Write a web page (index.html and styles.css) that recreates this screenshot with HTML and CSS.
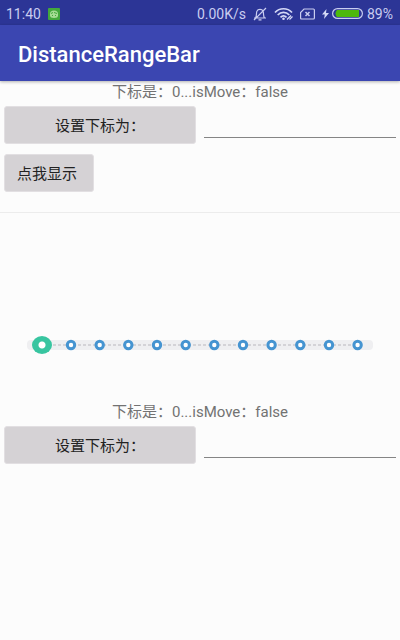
FILE: index.html
```html
<!DOCTYPE html>
<html lang="zh-CN">
<head>
<meta charset="utf-8">
<meta name="viewport" content="width=device-width, initial-scale=1">
<title>DistanceRangeBar</title>
<link rel="stylesheet" href="styles.css">
</head>
<body>
<div class="status">
  <span>11:40</span>
  <svg class="status-app" width="12" height="12" viewBox="0 0 12 12" aria-hidden="true">
    <rect width="12" height="12" rx="1" fill="#43a83c"/>
    <path d="M2 6a4 3.500 0 0 1 8 0v1.500a4 2.500 0 0 1-8 0z" fill="#a5dc94"/>
    <path d="M3 5.500l2-1M6 4.500l3 1M4 7.500h1M7 7.500h1" stroke="#43a83c" fill="none"/>
  </svg>
  <span class="status-speed">0.00K/s</span>
  <svg class="status-bell" width="14" height="14" viewBox="0 0 14 14" fill="none" stroke="#c9cdf0" stroke-width="1.200" aria-hidden="true">
    <path d="M1 11h12M2.500 11C4 9 3 6 4 4c1-2.200 5-2.200 6 0s0 5 1.500 7M5.500 12.800h3M1 13L13 1"/>
  </svg>
  <svg class="status-wifi" width="20" height="14" viewBox="0 0 20 14" fill="none" stroke="#d5d9f6" stroke-width="1.700" aria-hidden="true">
    <path d="M1 5.500C5.500 .5 13.500 .5 18 5.500M3.700 8c3.300-3.500 8.300-3.500 11.600 0M6.500 10.300c1.800-1.800 4.200-1.800 6 0"/>
    <circle cx="9.500" cy="11.800" r="1.300" fill="#d5d9f6" stroke="none"/>
    <path d="M13 12.500l4-4M15.500 12.500l3-3" stroke-width="1.200"/>
  </svg>
  <svg class="status-sim" width="15" height="12" viewBox="0 0 15 12" fill="none" stroke="#c9cdf0" stroke-width="1.200" aria-hidden="true">
    <path d="M4 1h9.400q1 0 1 1v8q0 1-1 1H1.600q-1 0-1-1V4.500z"/>
    <path d="M5.500 4l4 4M9.500 4l-4 4" stroke-width="1.500"/>
  </svg>
  <svg class="status-bolt" width="7" height="10" viewBox="0 0 7 10" fill="#d5d9f6" aria-hidden="true">
    <path d="M4.500 0L0 5.500h2.800L2 10l5-6H4z"/>
  </svg>
  <svg class="status-battery" width="31" height="11" viewBox="0 0 31 11" aria-hidden="true">
    <rect x=".6" y=".6" width="29.800" height="9.800" rx="4.900" fill="none" stroke="#c9cdf0" stroke-width="1.200"/>
    <path d="M5 2h22v7H5q-1.500-1.500-1.500-3.500T5 2z" fill="#4db80c"/>
  </svg>
  <span>89%</span>
</div>
<header class="appbar"><h1>DistanceRangeBar</h1></header>
<main>
  <section class="panel panel-top">
    <p class="state">下标是：0...isMove：false</p>
    <div class="row">
      <button type="button" class="btn">设置下标为：</button>
      <input class="field" type="text" aria-label="下标">
    </div>
    <button type="button" class="btn btn-small">点我显示</button>
  </section>
  <section class="range">
    <svg class="range-track" viewBox="0 0 346 20" aria-hidden="true">
      <rect y="5" width="346" height="10" rx="4" fill="#efeff1"/>
      <path d="M16 10h314" stroke="#b9b7bd" stroke-dasharray="3 2"/>
      <g fill="#fff" stroke="#4594d1" stroke-width="3">
        <circle cx="44" cy="10" r="3.700"/>
        <circle cx="72.700" cy="10" r="3.700"/>
        <circle cx="101.300" cy="10" r="3.700"/>
        <circle cx="130" cy="10" r="3.700"/>
        <circle cx="158.700" cy="10" r="3.700"/>
        <circle cx="187.300" cy="10" r="3.700"/>
        <circle cx="216" cy="10" r="3.700"/>
        <circle cx="244.600" cy="10" r="3.700"/>
        <circle cx="273.300" cy="10" r="3.700"/>
        <circle cx="302" cy="10" r="3.700"/>
        <circle cx="330.600" cy="10" r="3.700"/>
      </g>
    </svg>
    <input class="range-input" type="range" min="0" max="11" value="0" aria-label="距离">
  </section>
  <section class="panel">
    <p class="state">下标是：0...isMove：false</p>
    <div class="row">
      <button type="button" class="btn">设置下标为：</button>
      <input class="field" type="text" aria-label="下标">
    </div>
  </section>
</main>
</body>
</html>
```
FILE: styles.css
```css
* {
  box-sizing: border-box;
}

body {
  margin: 0;
  background: #fcfcfc;
  color: #222;
  font-family: Roboto, "Noto Sans CJK SC", sans-serif;
  font-size: 15px;
}

.status {
  display: flex;
  align-items: center;
  height: 25px;
  padding: 2px 7px 0 6px;
  background: #2c3596;
  color: #c9cdf0;
  font-size: 14px;
}

.status-app {
  margin-left: 7px;
}

.status-speed {
  margin-left: auto;
}

.status-bell {
  margin-left: 7px;
}

.status-wifi {
  margin-left: 7px;
}

.status-sim {
  margin-left: 6px;
}

.status-bolt {
  margin-left: 7px;
}

.status-battery {
  margin: 0 4px 0 3px;
}

.appbar {
  position: relative;
  display: flex;
  align-items: center;
  height: 56px;
  padding: 2px 18px 0;
  background: #3b46b1;
  color: #fff;
  box-shadow: 0 1px 3px rgba(0, 0, 0, 0.3);
}

.appbar h1 {
  margin: 0;
  font-size: 22px;
  font-weight: 500;
}

.panel-top {
  height: 132px;
  border-bottom: 1px solid #ececec;
}

.state {
  margin: 0;
  color: #727272;
  line-height: 22px;
  text-align: center;
}

.row {
  display: grid;
  grid-template-columns: 1fr 1fr;
  gap: 8px;
  padding: 3px 4px 10px;
}

.btn {
  height: 38px;
  border: 1px solid #e2dfe2;
  border-radius: 3px;
  padding: 0 12px 2px;
  background: #d5d2d5;
  color: #222;
  font: inherit;
}

.btn-small {
  min-width: 90px;
  margin-left: 4px;
  text-align: left;
}

.field {
  width: 100%;
  height: 32px;
  border: 0;
  border-bottom: 1px solid #858585;
  padding: 0 4px;
  background: transparent;
  font: inherit;
  outline: none;
}

.range {
  display: grid;
  align-items: center;
  padding: 122px 27px 46px;
}

.range-track,
.range-input {
  grid-area: 1 / 1;
}

.range-track {
  display: block;
  width: 100%;
}

.range-input {
  appearance: none;
  height: 20px;
  margin: 0 5px;
  background: transparent;
}

.range-input::-webkit-slider-thumb {
  appearance: none;
  width: 20px;
  height: 18px;
  border-radius: 50%;
  background: radial-gradient(circle, #fff 3px, #38c5a0 4px);
}
```
